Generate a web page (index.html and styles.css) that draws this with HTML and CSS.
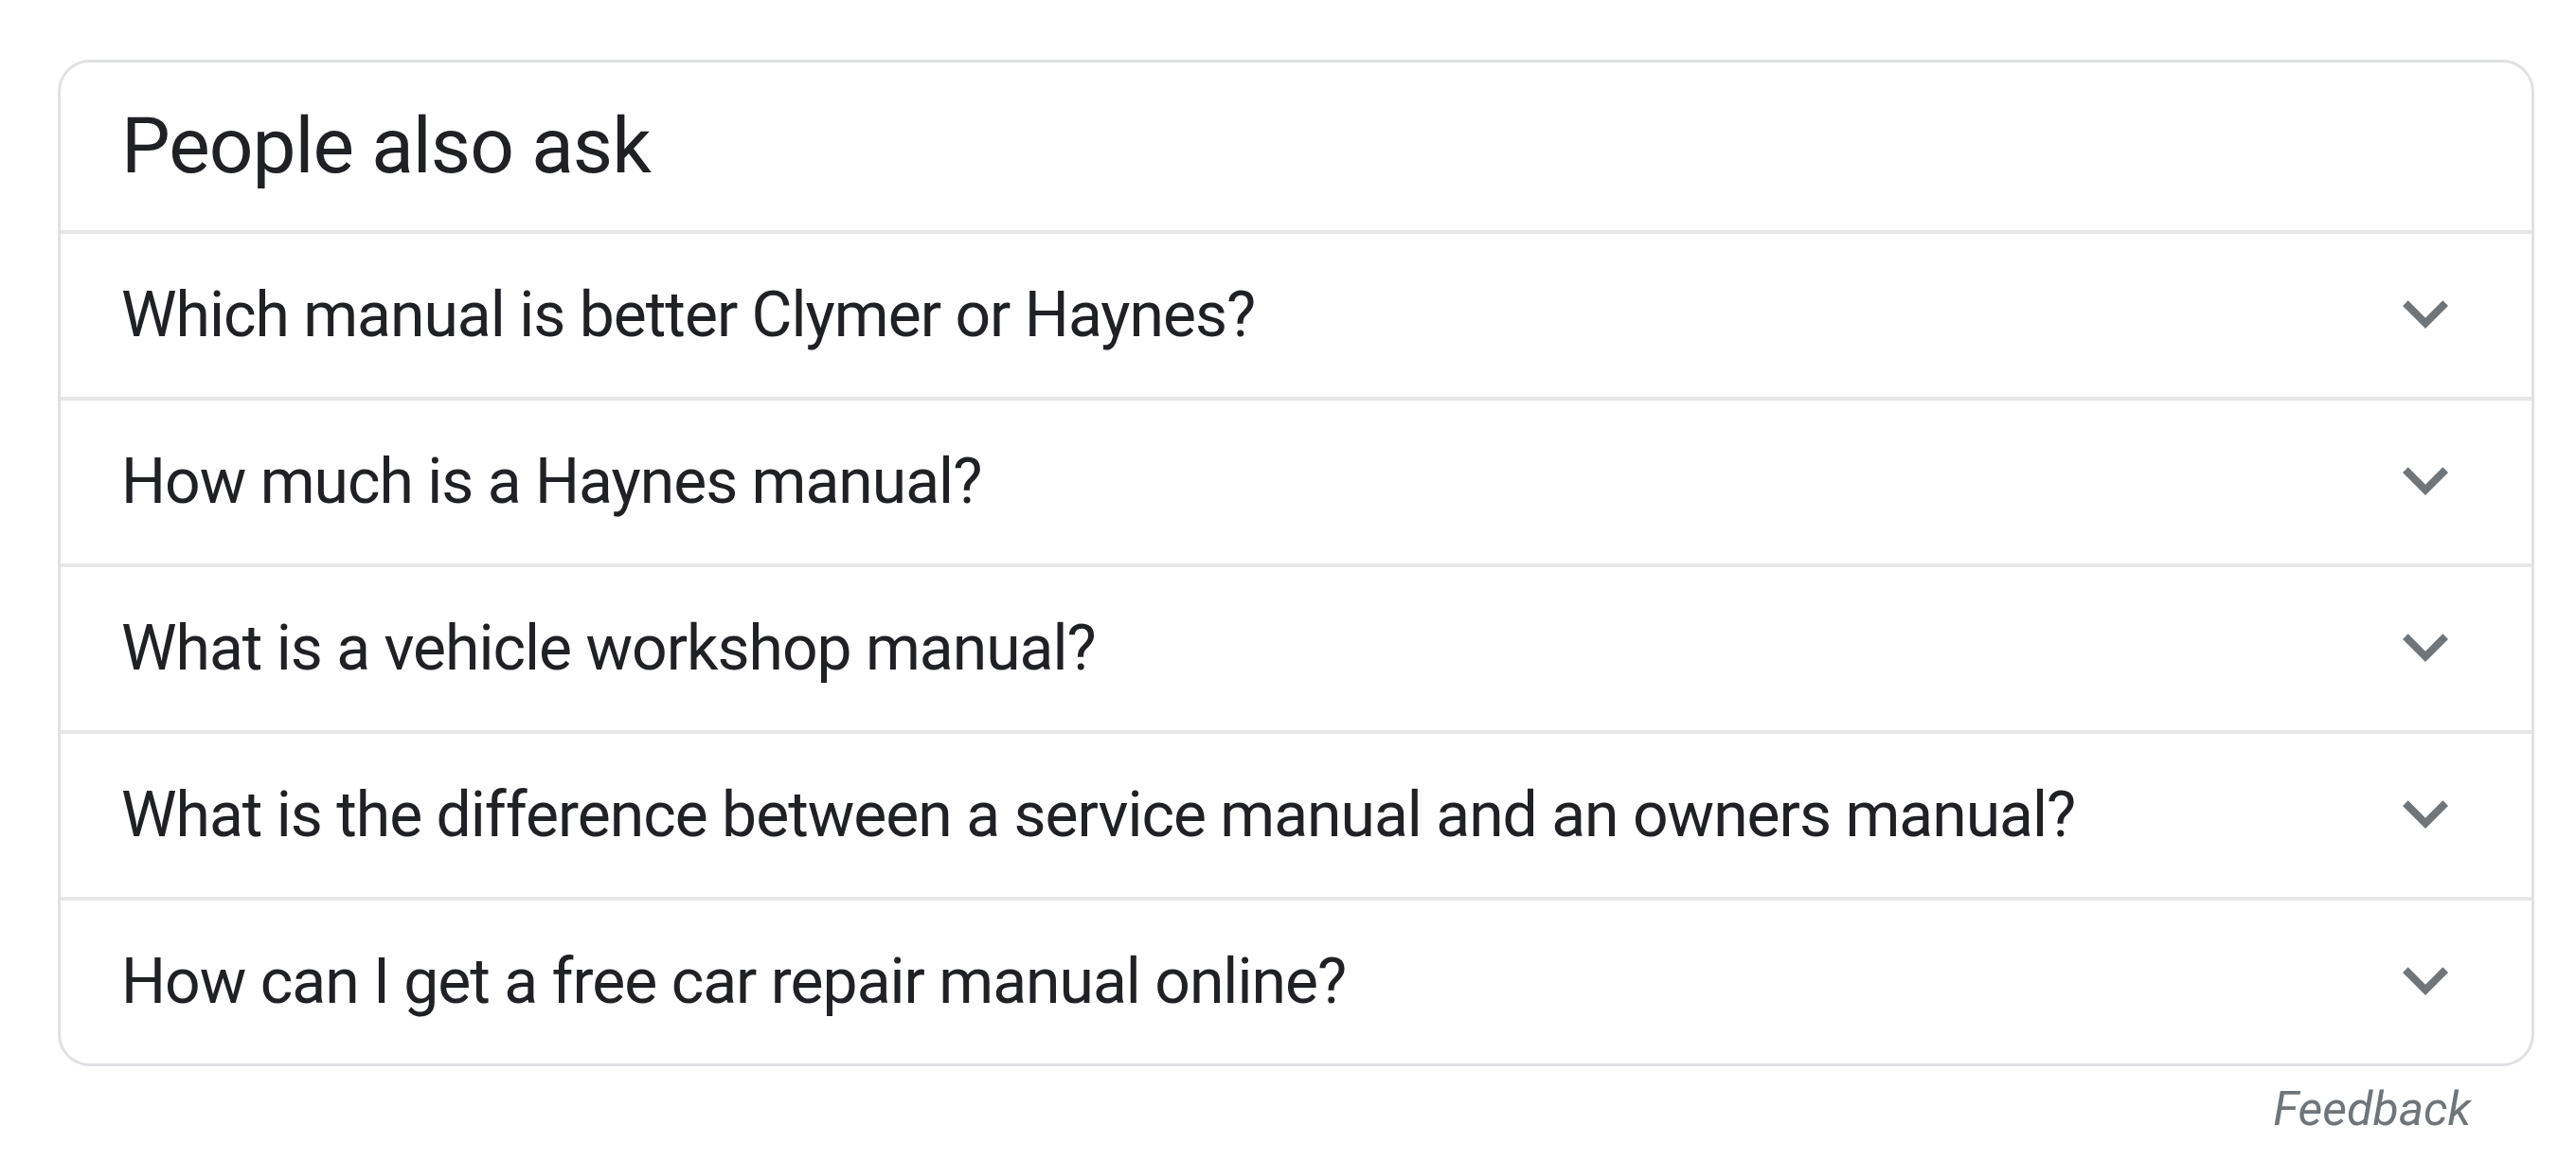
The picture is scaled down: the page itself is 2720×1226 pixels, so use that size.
FILE: index.html
```html
<!DOCTYPE html>
<html lang="en">
<head>
    <meta charset="UTF-8">
    <title>People also ask</title>
    <link rel="stylesheet" href="styles.css">
</head>
<body>
<div class="wrapper">
    <div class="card">
        <div class="card-header">
            <h2>People also ask</h2>
        </div>
        <div class="question">
            <span class="question-text">Which manual is better Clymer or Haynes?</span>
            <svg class="chevron" viewBox="0 0 24 24"><path d="M16.59 8.59L12 13.17 7.41 8.59 6 10l6 6 6-6z"/></svg>
        </div>
        <div class="question">
            <span class="question-text">How much is a Haynes manual?</span>
            <svg class="chevron" viewBox="0 0 24 24"><path d="M16.59 8.59L12 13.17 7.41 8.59 6 10l6 6 6-6z"/></svg>
        </div>
        <div class="question">
            <span class="question-text">What is a vehicle workshop manual?</span>
            <svg class="chevron" viewBox="0 0 24 24"><path d="M16.59 8.59L12 13.17 7.41 8.59 6 10l6 6 6-6z"/></svg>
        </div>
        <div class="question">
            <span class="question-text">What is the difference between a service manual and an owners manual?</span>
            <svg class="chevron" viewBox="0 0 24 24"><path d="M16.59 8.59L12 13.17 7.41 8.59 6 10l6 6 6-6z"/></svg>
        </div>
        <div class="question">
            <span class="question-text">How can I get a free car repair manual online?</span>
            <svg class="chevron" viewBox="0 0 24 24"><path d="M16.59 8.59L12 13.17 7.41 8.59 6 10l6 6 6-6z"/></svg>
        </div>
    </div>
    <div class="feedback">Feedback</div>
</div>
</body>
</html>
```

FILE: styles.css
```css
body {
    font-family: Roboto, 'Liberation Sans', Arial, sans-serif;
    background: #ffffff;
    margin: 0;
    padding: 0;
}
.wrapper {
    margin: 63px 44px 0 61px;
}
.card {
    border: 3px solid #dfe1e5;
    border-radius: 34px;
    background: #ffffff;
    overflow: hidden;
}
.card-header {
    padding: 47px 66px 48px 64px;
}
.card-header h2 {
    margin: 0;
    font-size: 82px;
    line-height: 82px;
    font-weight: 400;
    letter-spacing: -1px;
    color: #202124;
}
.question {
    display: flex;
    align-items: center;
    justify-content: space-between;
    min-height: 172px;
    padding: 0 64px 0 64px;
    border-top: 4px solid #e6e6e6;
}
.question-text {
    font-size: 66px;
    line-height: 88px;
    letter-spacing: -1px;
    color: #202124;
}
.chevron {
    width: 96px;
    height: 96px;
    margin-top: -4px;
    fill: #70757a;
    flex-shrink: 0;
}
.feedback {
    margin-top: 11px;
    padding-right: 67px;
    text-align: right;
    font-size: 50px;
    line-height: 68px;
    font-style: italic;
    color: #70757a;
}
```
